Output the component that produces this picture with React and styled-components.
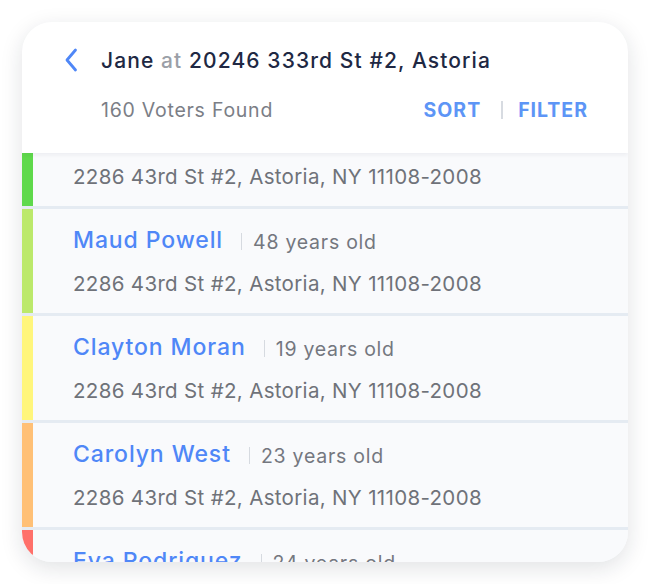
import React from "react";
import styled, { createGlobalStyle } from "styled-components";

const GlobalStyle = createGlobalStyle`
  html, body { margin: 0; padding: 0; background: #ffffff; }
  * { box-sizing: border-box; }
  body { font-family: Inter, "Noto Sans", sans-serif; -webkit-font-smoothing: antialiased; }
`;

const Page = styled.div`
  width: 650px;
  height: 584px;
  padding: 22px;
  background: #ffffff;
`;

const Card = styled.div`
  width: 606px;
  height: 540px;
  border-radius: 30px;
  overflow: hidden;
  background: #f9fafc;
  box-shadow: 0 6px 22px rgba(20, 30, 50, 0.13);
  display: flex;
  flex-direction: column;
`;

const Header = styled.header`
  position: relative;
  z-index: 1;
  flex: 0 0 131px;
  background: #ffffff;
  box-shadow: 0 2px 4px rgba(30, 40, 60, 0.06);
  padding: 26px 40px 0 42px;
  display: flex;
  flex-direction: column;
`;

const TitleRow = styled.div`
  display: flex;
  align-items: center;
  height: 24px;
  gap: 23px;
`;

const BackButton = styled.button`
  border: 0;
  background: none;
  padding: 0;
  width: 14px;
  height: 24px;
  display: flex;
  align-items: center;
  justify-content: center;
  cursor: pointer;
`;

const Title = styled.h1`
  margin: 0;
  font-size: 21px;
  font-weight: 500;
  color: #202843;
  letter-spacing: 1.1px;
  white-space: nowrap;
`;

const Muted = styled.span`
  color: #9b9fa7;
`;

const SubRow = styled.div`
  display: flex;
  align-items: center;
  justify-content: space-between;
  margin-top: 26px;
  padding-left: 37px;
  height: 24px;
`;

const Count = styled.div`
  font-size: 19.5px;
  color: #7b7e86;
  letter-spacing: 0.75px;
`;

const Actions = styled.div`
  display: flex;
  align-items: center;
`;

const ActionButton = styled.button`
  border: 0;
  background: none;
  padding: 0;
  font-family: inherit;
  font-size: 19.5px;
  font-weight: 700;
  letter-spacing: 1px;
  color: #5d95f6;
  cursor: pointer;
`;

const ActionDivider = styled.span`
  width: 2px;
  height: 18px;
  background: #d7dbe1;
  margin: 0 15px 0 20px;
`;

const ListViewport = styled.div`
  flex: 1;
  overflow: hidden;
`;

const List = styled.ul`
  list-style: none;
  margin: -51px 0 0 0;
  padding: 0;
`;

const Row = styled.li`
  display: flex;
  height: 107px;
  border-bottom: 3px solid #e5ebf2;
  background: #f9fafc;
`;

const Bar = styled.div`
  width: 11px;
  flex: 0 0 11px;
  background: ${(p) => p.$color};
`;

const RowBody = styled.div`
  flex: 1;
  padding: 18px 0 0 40px;
  display: flex;
  flex-direction: column;
`;

const NameLine = styled.div`
  display: flex;
  align-items: center;
  height: 26px;
`;

const Name = styled.span`
  font-size: 23px;
  font-weight: 500;
  color: #4f87f7;
  letter-spacing: 0.9px;
`;

const AgeDivider = styled.span`
  width: 1px;
  height: 17px;
  background: #d6dae0;
  margin: 3px 11px 0 18px;
`;

const Age = styled.span`
  font-size: 19.5px;
  color: #74777f;
  margin-top: 4px;
  letter-spacing: 0.75px;
`;

const Address = styled.div`
  margin-top: 17px;
  font-size: 20.5px;
  color: #6f7279;
  letter-spacing: 0.33px;
  height: 26px;
  display: flex;
  align-items: center;
`;

const voters = [
  { name: "Jordan Lee", age: 31, color: "#5fd94b" },
  { name: "Maud Powell", age: 48, color: "#bce96b" },
  { name: "Clayton Moran", age: 19, color: "#fff67c" },
  { name: "Carolyn West", age: 23, color: "#ffc076" },
  { name: "Eva Rodriguez", age: 24, color: "#ff706a" },
];

const ChevronLeft = () => (
  <svg width="14" height="24" viewBox="0 0 14 24" fill="none">
    <path d="M11.5 2 L3 12 L11.5 22" stroke="#4f87f7" strokeWidth="2.8" strokeLinecap="round" strokeLinejoin="round" />
  </svg>
);

export default function App() {
  return (
    <>
      <GlobalStyle />
      <Page>
        <Card>
          <Header>
            <TitleRow>
              <BackButton aria-label="Back">
                <ChevronLeft />
              </BackButton>
              <Title>
                Jane <Muted>at</Muted> 20246 333rd St #2, Astoria
              </Title>
            </TitleRow>
            <SubRow>
              <Count>160 Voters Found</Count>
              <Actions>
                <ActionButton>SORT</ActionButton>
                <ActionDivider />
                <ActionButton>FILTER</ActionButton>
              </Actions>
            </SubRow>
          </Header>
          <ListViewport>
            <List>
              {voters.map((v) => (
                <Row key={v.name}>
                  <Bar $color={v.color} />
                  <RowBody>
                    <NameLine>
                      <Name>{v.name}</Name>
                      <AgeDivider />
                      <Age>{v.age} years old</Age>
                    </NameLine>
                    <Address>2286 43rd St #2, Astoria, NY 11108-2008</Address>
                  </RowBody>
                </Row>
              ))}
            </List>
          </ListViewport>
        </Card>
      </Page>
    </>
  );
}
